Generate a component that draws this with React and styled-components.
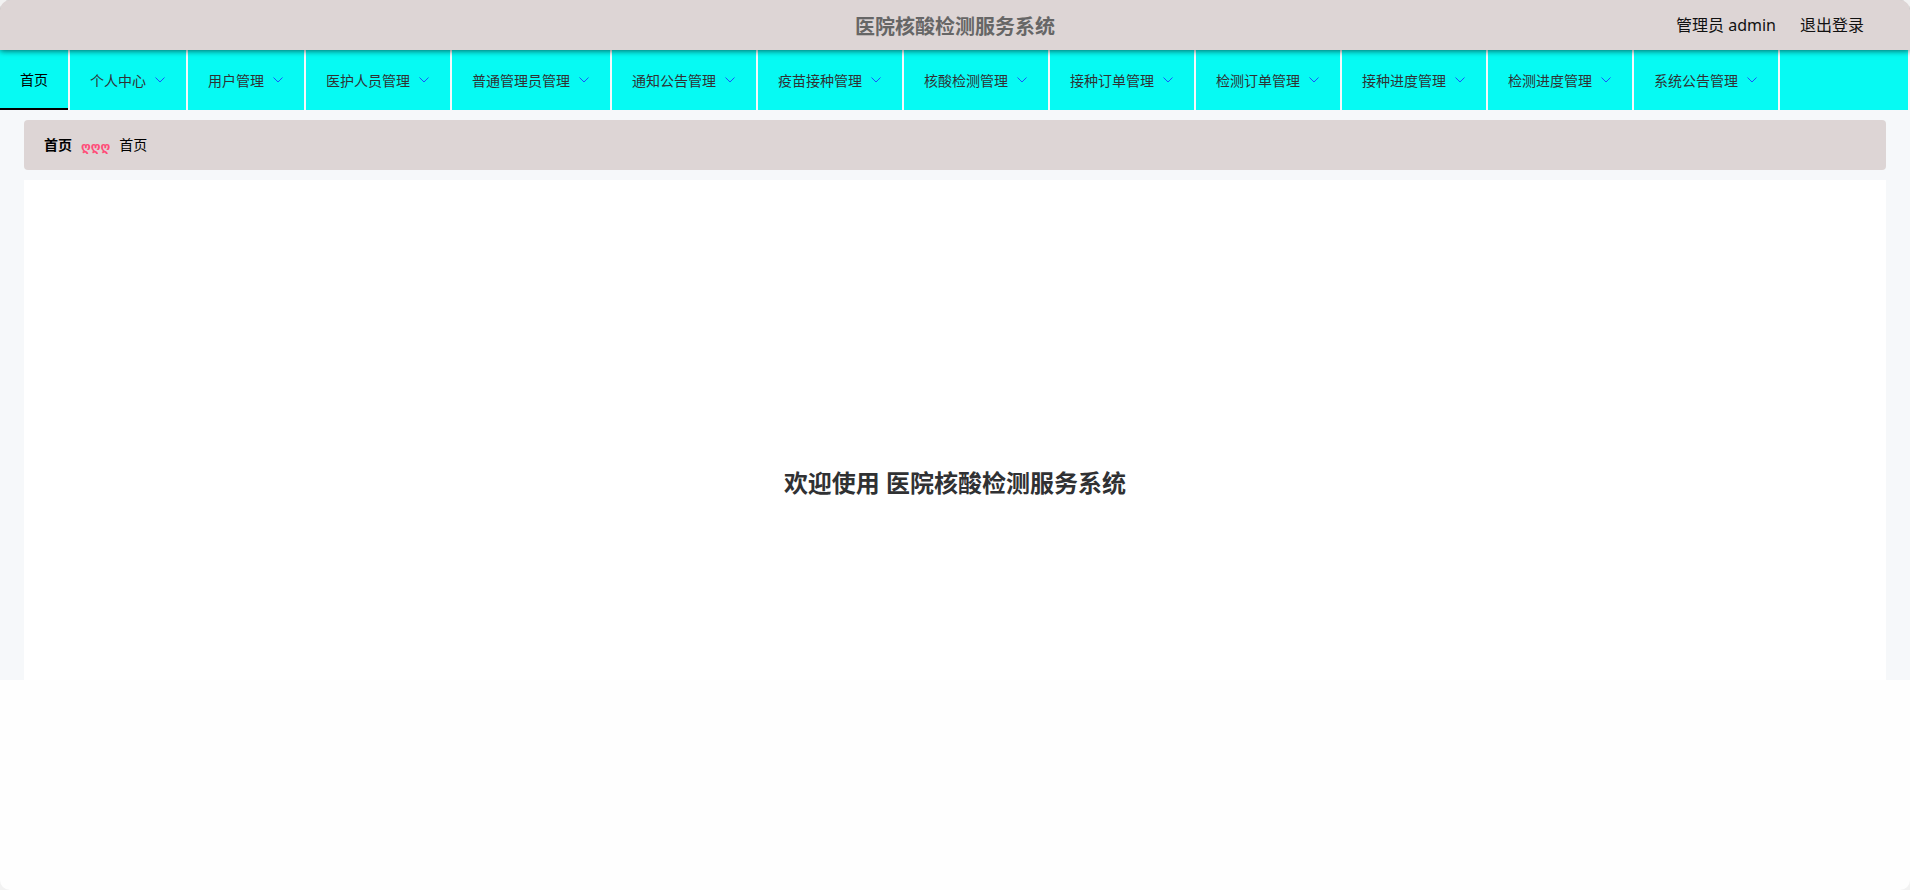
import React from "react";
import styled, { createGlobalStyle } from "styled-components";

const GlobalStyle = createGlobalStyle`
  *, *::before, *::after { box-sizing: border-box; }
  html { background: #f2f2f2; }
  body {
    margin: 0;
    font-family: "Noto Sans", "Noto Sans CJK SC", "DejaVu Sans", sans-serif;
    font-size: 14px;
    color: #303133;
  }
`;

const Page = styled.div`
  min-height: 100vh;
  background: #fefefe;
  border-radius: 10px;
  overflow: hidden;
`;

const Header = styled.header`
  position: relative;
  z-index: 1;
  display: grid;
  grid-template-columns: 1fr auto 1fr;
  align-items: center;
  height: 50px;
  padding: 0 46px;
  background: #ddd5d5;
  box-shadow: 0 1px 6px rgba(0, 0, 0, 0.6);
`;

const Title = styled.h1`
  grid-column: 2;
  margin: 0;
  padding-top: 4px;
  font-size: 20px;
  line-height: 28px;
  font-weight: 700;
  color: #666;
`;

const Account = styled.div`
  display: flex;
  justify-content: flex-end;
  gap: 24px;
  font-size: 16px;
  line-height: 24px;
  color: #111;
`;

const LogoutButton = styled.button`
  padding: 0;
  border: 0;
  background: none;
  font: inherit;
  color: inherit;
  cursor: pointer;
`;

const Body = styled.div`
  background: #f6f8fa;
`;

const Nav = styled.nav`
  margin-right: 2px;
  background: #06faf3;
`;

const Menu = styled.ul`
  display: flex;
  height: 60px;
  margin: 0;
  padding: 0;
  list-style: none;
`;

const MenuItem = styled.li`
  flex: none;
  border-right: 2px solid #f6f8fa;
`;

const MenuLink = styled.a`
  display: flex;
  align-items: center;
  height: 60px;
  padding: 0 20px;
  border-bottom: 2px solid #000;
  color: #000;
  text-decoration: none;
  white-space: nowrap;
`;

const MenuButton = styled.button`
  display: flex;
  align-items: center;
  gap: 8px;
  height: 60px;
  padding: 0 20px;
  border: 0;
  background: none;
  font: inherit;
  color: #303133;
  white-space: nowrap;
  cursor: pointer;
`;

const Chevron = () => (
  <svg width="12" height="12" viewBox="0 0 12 12" fill="none" stroke="#1a50ff" aria-hidden="true">
    <path d="M1.5 3.5 L6 8 L10.5 3.5" />
  </svg>
);

const Content = styled.main`
  padding: 10px 24px 0;
`;

const Breadcrumb = styled.nav`
  display: flex;
  align-items: center;
  gap: 9px;
  height: 50px;
  margin-bottom: 10px;
  padding: 0 20px 2px;
  border-radius: 4px;
  background: #ddd5d5;
  color: #000;
`;

const CrumbLink = styled.a`
  font-weight: 700;
  color: #000;
  text-decoration: none;
`;

const Separator = styled.span`
  padding-top: 4px;
  font-size: 12px;
  font-weight: 700;
  color: #ff4d79;
`;

const Welcome = styled.section`
  display: flex;
  justify-content: center;
  height: 500px;
  padding-top: 285px;
  background: #fff;
`;

const WelcomeTitle = styled.h2`
  margin: 0;
  font-size: 24px;
  line-height: 36px;
  font-weight: 700;
  color: #303133;
`;

const menus = [
  "个人中心",
  "用户管理",
  "医护人员管理",
  "普通管理员管理",
  "通知公告管理",
  "疫苗接种管理",
  "核酸检测管理",
  "接种订单管理",
  "检测订单管理",
  "接种进度管理",
  "检测进度管理",
  "系统公告管理",
];

export default function App() {
  return (
    <Page lang="zh-CN">
      <GlobalStyle />
      <Header>
        <Title>医院核酸检测服务系统</Title>
        <Account>
          <span>管理员 admin</span>
          <LogoutButton type="button">退出登录</LogoutButton>
        </Account>
      </Header>
      <Body>
        <Nav>
          <Menu>
            <MenuItem>
              <MenuLink href="#home">首页</MenuLink>
            </MenuItem>
            {menus.map((label) => (
              <MenuItem key={label}>
                <MenuButton type="button">
                  {label}
                  <Chevron />
                </MenuButton>
              </MenuItem>
            ))}
          </Menu>
        </Nav>
        <Content>
          <Breadcrumb>
            <CrumbLink href="#home">首页</CrumbLink>
            <Separator>ღღღ</Separator>
            <span>首页</span>
          </Breadcrumb>
          <Welcome>
            <WelcomeTitle>欢迎使用 医院核酸检测服务系统</WelcomeTitle>
          </Welcome>
        </Content>
      </Body>
    </Page>
  );
}
